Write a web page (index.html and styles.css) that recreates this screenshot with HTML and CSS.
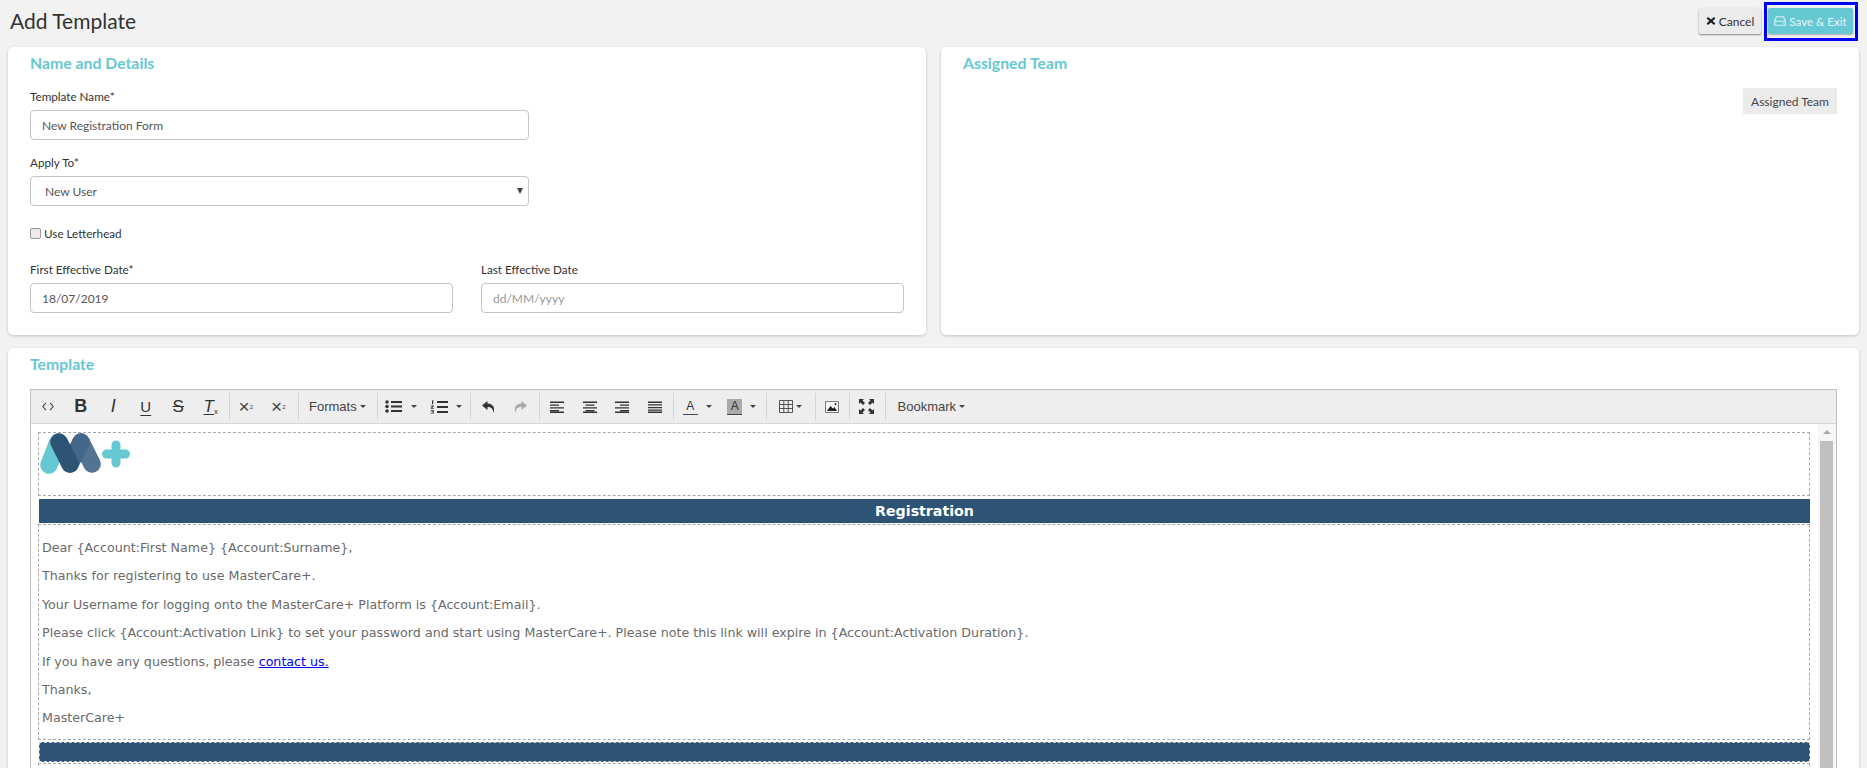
FILE: index.html

```html
<!DOCTYPE html>
<html lang="en">
<head>
  <meta charset="UTF-8">
  <title>Add Template</title>
  <link rel="stylesheet" href="styles.css">
</head>
<body>

<svg class="defs" width="0" height="0">
  <symbol id="i-lines-left" viewBox="0 0 14 12"><path d="M0 .5h14v1.400H0zM0 3.500h9v1.200H0zM0 6.200h14v1.200H0zM0 9h9v1.200H0zM0 10.600h14V12H0z"/></symbol>
  <symbol id="i-lines-center" viewBox="0 0 14 12"><path d="M0 .5h14v1.400H0zM2.500 3.500h9v1.200h-9zM0 6.200h14v1.200H0zM2.500 9h9v1.200h-9zM0 10.600h14V12H0z"/></symbol>
  <symbol id="i-lines-right" viewBox="0 0 14 12"><path d="M0 .5h14v1.400H0zM5 3.500h9v1.200H5zM0 6.200h14v1.200H0zM5 9h9v1.200H5zM0 10.600h14V12H0z"/></symbol>
  <symbol id="i-lines-full" viewBox="0 0 14 12"><path d="M0 .5h14v1.400H0zM0 3.300h14v1.200H0zM0 6h14v1.200H0zM0 8.600h14v1.200H0zM0 10.600h14V12H0z"/></symbol>
</svg>

<header class="page-head">
  <h1>Add Template</h1>
  <div class="head-actions">
    <button class="btn btn-cancel">
      <svg class="btn-icon" viewBox="0 0 10 10"><path d="M2 1l3 2.600L8 1l1.400 1.400L6.700 5l2.700 2.600L8 9 5 6.400 2 9 .6 7.600 3.300 5 .6 2.400z" fill="#222"/></svg>
      Cancel
    </button>
    <div class="focus-ring">
      <button class="btn btn-save">
        <svg class="btn-icon save-icon" viewBox="0 0 12 10"><path d="M2.500.7h7L11.300 5v4.300H.7V5zM.7 5.200h10.600M8.600 7.300h1.200" fill="none" stroke="#d8f1f4" stroke-width="1.100"/></svg>
        Save &amp; Exit
      </button>
    </div>
  </div>
</header>

<div class="top-row">
  <section class="card details-card">
    <h2>Name and Details</h2>
    <div class="field">
      <label>Template Name*</label>
      <input type="text" value="New Registration Form">
    </div>
    <div class="field apply-field">
      <label>Apply To*</label>
      <div class="select-wrap">
        <select><option>New User</option></select>
      </div>
    </div>
    <label class="check-row"><input type="checkbox"> Use Letterhead</label>
    <div class="date-row">
      <div class="field">
        <label>First Effective Date*</label>
        <input type="text" value="18/07/2019">
      </div>
      <div class="field">
        <label>Last Effective Date</label>
        <input type="text" placeholder="dd/MM/yyyy">
      </div>
    </div>
  </section>

  <section class="card team-card">
    <h2>Assigned Team</h2>
    <div class="team-actions"><button class="btn-team">Assigned Team</button></div>
  </section>
</div>

<section class="card template-card">
  <h2>Template</h2>
  <div class="editor">
    <div class="toolbar">
      <div class="tool-group">
        <span class="tool"><svg width="12" height="9" viewBox="0 0 12 9"><path d="M4 .8L.8 4.500 4 8.200M8 .8l3.200 3.700L8 8.200" fill="none" stroke="#444" stroke-width="1.100"/></svg></span>
        <span class="tool tool-b">B</span>
        <span class="tool tool-i">I</span>
        <span class="tool tool-u">U</span>
        <span class="tool tool-s">S</span>
        <span class="tool tool-t"><span>T</span><small>x</small></span>
      </div>
      <div class="tool-group">
        <span class="tool tool-x">×<sup>2</sup></span>
        <span class="tool tool-x">×<sub>2</sub></span>
      </div>
      <div class="tool-group">
        <span class="tool-text formats">Formats<i class="caret"></i></span>
      </div>
      <div class="tool-group">
        <span class="tool split">
          <svg width="18" height="13" viewBox="0 0 18 13"><circle cx="2" cy="2" r="1.800"/><circle cx="2" cy="6.500" r="1.800"/><circle cx="2" cy="11" r="1.800"/><path d="M6 1h11v2H6zM6 5.500h11v2H6zM6 10h11v2H6z"/></svg>
          <i class="caret"></i>
        </span>
        <span class="tool split">
          <svg width="18" height="14" viewBox="0 0 18 14"><path d="M7 1h11v2H7zM7 6h11v2H7zM7 11h11v2H7zM2 .3h1.200v4H2zM.6 5.500h3.200v1L2 8h1.800v.8H.6v-.8l2-1.700H.6zM.6 10h3.200v3.600H.6v-.8h2.200v-.7H1.400v-.7h1.400v-.6H.6z"/></svg>
          <i class="caret"></i>
        </span>
      </div>
      <div class="tool-group">
        <span class="tool"><svg width="13" height="14" viewBox="0 0 13 14"><path d="M5.500 1L0 5.500l5.500 4.500V7c3.500 0 5.500 1.500 6 6 1.500-5 .5-9-6-9.500z"/></svg></span>
        <span class="tool muted"><svg width="13" height="14" viewBox="0 0 13 14"><path d="M7.500 1L13 5.500 7.500 10V7c-3.500 0-5.500 1.500-6 6C0 8 1 4 7.500 3.500z"/></svg></span>
      </div>
      <div class="tool-group">
        <span class="tool"><svg class="align" viewBox="0 0 14 12"><use href="#i-lines-left"/></svg></span>
        <span class="tool"><svg class="align" viewBox="0 0 14 12"><use href="#i-lines-center"/></svg></span>
        <span class="tool"><svg class="align" viewBox="0 0 14 12"><use href="#i-lines-right"/></svg></span>
        <span class="tool"><svg class="align" viewBox="0 0 14 12"><use href="#i-lines-full"/></svg></span>
      </div>
      <div class="tool-group">
        <span class="tool split"><span class="letter">A</span><i class="caret"></i></span>
        <span class="tool split"><span class="letter letter-bg">A</span><i class="caret"></i></span>
      </div>
      <div class="tool-group table-group">
        <span class="tool split">
          <svg width="14" height="13" viewBox="0 0 14 13"><path d="M.5.5h13v12H.5zM.5 4.500h13M.5 8.500h13M4.800.5v12M9.200.5v12" fill="none" stroke="#444" stroke-width=".9"/></svg>
          <i class="caret"></i>
        </span>
      </div>
      <div class="tool-group image-group">
        <span class="tool"><svg width="14" height="12" viewBox="0 0 14 12"><path d="M.5.5h13v11H.5z" fill="#f5f5f5" stroke="#777"/><path d="M2 10l3.500-5 2.500 2.500 1.500-1.500L12 10z" fill="#222"/><circle cx="10.500" cy="3" r="1" fill="#222"/></svg></span>
      </div>
      <div class="tool-group full-group">
        <span class="tool"><svg width="15" height="15" viewBox="0 0 15 15"><path d="M0 0h5L3.500 1.500 6 4 4 6 1.500 3.500 0 5zM15 0v5l-1.500-1.500L11 6 9 4l2.500-2.500L10 0zM0 15v-5l1.500 1.500L4 9l2 2-2.500 2.500L5 15zM15 15h-5l1.500-1.500L9 11l2-2 2.500 2.500L15 10z"/></svg></span>
      </div>
      <div class="tool-group last">
        <span class="tool-text bookmark">Bookmark<i class="caret"></i></span>
      </div>
    </div>

    <div class="editor-body">
      <div class="doc">
        <div class="doc-row doc-logo">
          <svg class="logo" width="92" height="42" viewBox="0 0 92 42">
            <g fill="none" stroke-linecap="round" stroke-width="17.500">
              <path d="M18 9L9 32" stroke="#66c8d2"/>
              <path d="M41 9l11 22" stroke="#527391"/>
              <path d="M41 9L30 31" stroke="#44688a"/>
              <path d="M19 9l11 22" stroke="#2d5475"/>
            </g>
            <path d="M76 12v18M66.500 21h19" fill="none" stroke="#66c8d2" stroke-width="9" stroke-linecap="round"/>
          </svg>
        </div>
        <div class="doc-banner">Registration</div>
        <div class="doc-row doc-text">
          <p>Dear {Account:First Name} {Account:Surname},</p>
          <p>Thanks for registering to use MasterCare+.</p>
          <p>Your Username for logging onto the MasterCare+ Platform is {Account:Email}.</p>
          <p>Please click {Account:Activation Link} to set your password and start using MasterCare+. Please note this link will expire in {Account:Activation Duration}.</p>
          <p>If you have any questions, please <a href="#">contact us.</a></p>
          <p>Thanks,</p>
          <p>MasterCare+</p>
        </div>
        <div class="doc-banner doc-banner-empty"></div>
        <div class="doc-row doc-foot"></div>
      </div>
      <div class="scrollbar">
        <i class="scroll-up"></i>
        <div class="scroll-thumb"></div>
      </div>
    </div>
  </div>
</section>

</body>
</html>
```

FILE: styles.css

```css
html, body { height: 768px; overflow: hidden; }
body {
  margin: 0;
  padding: 0 8px;
  box-sizing: border-box;
  background: #f2f2f2;
  font-family: "Lato", "Open Sans", sans-serif;
  font-size: 12px;
  color: #333;
}
.defs { position: absolute; }
button { font-family: inherit; cursor: pointer; }

.page-head {
  height: 47px;
  display: flex;
  justify-content: space-between;
  align-items: flex-start;
}
h1 {
  margin: 9px 0 0 2px;
  font-size: 21px;
  font-weight: 400;
  line-height: 24px;
  color: #333;
}
.head-actions { display: flex; align-items: flex-start; margin-right: 1px; }
.btn {
  height: 26px;
  border: none;
  border-radius: 2px;
  font-size: 12px;
  padding: 0;
  display: flex;
  align-items: center;
  justify-content: center;
  gap: 3px;
}
.btn-icon { width: 10px; height: 10px; }
.save-icon { width: 12px; }
.btn-cancel {
  width: 62px;
  margin: 8px 3px 0 0;
  background: #ebebeb;
  color: #333;
  box-shadow: 0 1px 2px rgba(0,0,0,0.45);
}
.focus-ring {
  border: 3px solid #0000f0;
  padding: 3px 2px 4px 1px;
  margin-top: 2px;
}
.btn-save {
  width: 85px;
  background: #66c8d2;
  color: #e6f6f8;
  font-size: 11.600px;
  box-shadow: 0 1px 2px rgba(0,0,0,0.3);
}

.top-row {
  display: grid;
  grid-template-columns: 1fr 1fr;
  gap: 15px;
}
.card {
  background: #fff;
  border-radius: 5px;
  box-shadow: 0 1px 3px rgba(0,0,0,0.2);
  box-sizing: border-box;
  padding: 0 22px;
}
h2 {
  margin: 0;
  padding-top: 7px;
  font-size: 15.800px;
  line-height: 18px;
  font-weight: 700;
  color: #66c8d2;
}
.details-card { height: 288px; }
.team-actions { display: flex; justify-content: flex-end; margin-top: 16px; }
.btn-team {
  width: 94px;
  height: 26px;
  border: none;
  background: #ebebeb;
  color: #444;
  font-size: 12px;
  padding: 0;
}

.field label { display: block; font-size: 11.700px; line-height: 16px; margin-bottom: 6px; color: #333; }
.field input, .select-wrap select {
  display: block;
  box-sizing: border-box;
  width: 100%;
  border: 1px solid #c4c4c4;
  border-radius: 4px;
  background: #fff;
  font-family: inherit;
  font-size: 12px;
  color: #555;
  outline: none;
}
.field input { height: 30px; padding: 0 11px; }
.field input::placeholder { color: #999; opacity: 1; }
.details-card > .field { width: 499px; margin-top: 14px; }
.details-card > .field:first-of-type { margin-top: 16px; }
.select-wrap { position: relative; }
.select-wrap select {
  height: 30px;
  padding: 0 14px;
  appearance: none;
}
.select-wrap::after {
  content: "";
  position: absolute;
  right: 6px;
  top: 12px;
  border: 3px solid transparent;
  border-top: 6px solid #444;
  border-bottom: 0;
}
.check-row {
  display: flex;
  align-items: center;
  gap: 3px;
  margin-top: 19px;
  height: 16px;
  font-size: 11.700px;
  color: #333;
}
.check-row input {
  appearance: none;
  margin: 0;
  width: 11px;
  height: 11px;
  background: #ececec;
  border: 1px solid #999;
  border-radius: 2px;
  box-sizing: border-box;
}
.date-row {
  display: grid;
  grid-template-columns: 423px 423px;
  gap: 28px;
  margin-top: 20px;
}

.template-card { margin-top: 13px; height: 500px; }
.editor {
  margin-top: 16px;
  border: 1px solid #c0c0c0;
}
.toolbar {
  height: 33px;
  display: flex;
  align-items: center;
  background: #eee;
  border-bottom: 1px solid #d4d4d4;
  color: #333;
}
.tool-group {
  display: flex;
  align-items: center;
  height: 27px;
  padding: 0 2px 0 1px;
  border-right: 1px solid #d4d4d4;
}
.tool-group.last { border-right: none; }
.tool {
  width: 32.500px;
  height: 27px;
  display: flex;
  align-items: center;
  justify-content: center;
  font-family: "Liberation Sans", sans-serif;
}
.tool svg { fill: #333; }
.muted svg { fill: #aaa; }
.tool-b { font-weight: 700; font-size: 18px; }
.tool-i { font-style: italic; font-size: 18px; }
.tool-u { font-size: 15px; text-decoration: underline; text-underline-offset: 3px; }
.tool-s { font-size: 17px; text-decoration: line-through; }
.tool-t { font-size: 17px; font-style: italic; }
.tool-t span { text-decoration: underline; text-underline-offset: 2px; }
.tool-t small { font-size: 8px; margin-top: 9px; font-style: normal; }
.tool-x { font-size: 19px; font-weight: 400; color: #444; padding-right: 3px; box-sizing: border-box; }
.tool-x sup, .tool-x sub { font-size: 6px; line-height: 0; }
.tool-text {
  display: flex;
  align-items: center;
  gap: 3px;
  font-size: 13px;
  font-family: "Liberation Sans", sans-serif;
  color: #444;
}
.formats { width: 75px; box-sizing: border-box; padding-left: 9px; }
.bookmark { padding-left: 11px; }
.caret {
  display: inline-block;
  border: 3.500px solid transparent;
  border-top: 3.500px solid #444;
  border-bottom: 0;
}
.split { width: 44.500px; gap: 8px; }
.align { width: 14px; height: 12px; }
.letter {
  width: 15px;
  font-size: 12px;
  line-height: 15px;
  text-align: center;
  border-bottom: 1px solid #444;
}
.letter-bg { background: #aaa; }
.table-group .tool { gap: 3px; }
.image-group .tool { width: 30px; }
.full-group .tool { width: 32px; }

.editor-body { display: flex; height: 450px; }
.doc {
  flex: 1;
  min-width: 0;
  padding: 8px 8px 0 7px;
  font-family: "DejaVu Sans", sans-serif;
  font-size: 12.670px;
  color: #6a6a6a;
}
.doc-row { border: 1px dashed #a8a8a8; }
.doc-logo { height: 62px; margin-bottom: 3px; }
.logo { display: block; margin: 0 0 0 1px; }
.doc-banner {
  height: 24px;
  line-height: 24px;
  background: #2d5475;
  color: #fff;
  font-weight: 700;
  font-size: 14.200px;
  text-align: center;
  margin: 0 0 1px 1px;
}
.doc-text { padding: 13px 3px 0 3px; height: 201px; margin-bottom: 2px; }
.doc-text p { margin: 0 0 8.400px; line-height: 20px; }
.doc-text a { color: #00e; }
.doc-banner-empty { height: 20px; border: 1px dashed #ccc; box-sizing: border-box; margin-bottom: 1px; }
.doc-foot { height: 100px; }

.scrollbar {
  width: 18px;
  background: #f6f6f6;
  position: relative;
  padding-top: 17px;
  box-sizing: border-box;
}
.scroll-up {
  position: absolute;
  left: 5px;
  top: 6px;
  border: 4px solid transparent;
  border-bottom: 4px solid #a8a8a8;
  border-top: 0;
}
.scroll-thumb { width: 13px; margin-left: 2px; height: 500px; background: #c0c0c0; }
```
